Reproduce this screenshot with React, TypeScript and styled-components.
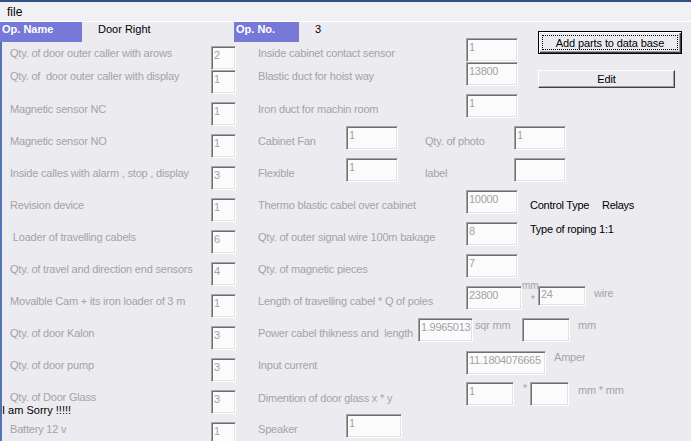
import React from "react";
import styled, { createGlobalStyle } from "styled-components";

const Global = createGlobalStyle`
  html, body { margin: 0; padding: 0; background: #ECEBEF; }
  body { font-family: "Liberation Sans", Arial, sans-serif; }
`;

const FONT = `"Liberation Sans", Arial, sans-serif`;

const Window = styled.div`
  width: 691px;
  height: 441px;
  overflow: hidden;
  box-sizing: border-box;
  background: #ECEBEF;
  border-top: 2px solid #2F4F88;
  display: flex;
  flex-direction: column;
  font-family: ${FONT};
  font-size: 11px;
`;

const MenuBar = styled.div`
  flex: none;
  height: 19px;
  display: flex;
  align-items: center;
  padding-left: 7px;
  background: #F1F0F4;
  border-bottom: 1px solid #FFFFFF;
  color: #000;
  font-size: 12px;
`;

const Header = styled.div`
  flex: none;
  height: 20px;
  display: flex;
  align-items: flex-start;
`;

const Tag = styled.div<{ $w: number }>`
  flex: none;
  box-sizing: border-box;
  width: ${(p) => p.$w}px;
  height: 20px;
  padding: 1px 0 0 2px;
  background: #7679D8;
  color: #FFFFFF;
  font-weight: bold;
  font-size: 11px;
  line-height: 13px;
`;

const HeadValue = styled.div<{ $w: number }>`
  flex: none;
  width: ${(p) => p.$w}px;
  margin: 1px 0 0 16px;
  color: #000;
  font-size: 11px;
  line-height: 13px;
`;

const Body = styled.div`
  flex: 1;
  display: flex;
  flex-direction: column;
  border-left: 2px solid #5273B5;
`;

const Row = styled.div<{ $h?: number }>`
  flex: none;
  display: flex;
  align-items: flex-start;
  height: ${(p) => p.$h ?? 32}px;
`;

const LeftCell = styled.div`
  flex: none;
  width: 209px;
  display: flex;
  flex-direction: column;
`;

const Label = styled.div<{ $dy?: number; $w?: number; $ml?: number; $indent?: number }>`
  flex: none;
  box-sizing: border-box;
  ${(p) => (p.$w !== undefined ? `width: ${p.$w}px;` : "")}
  margin-top: ${(p) => p.$dy ?? 9}px;
  margin-left: ${(p) => p.$ml ?? 0}px;
  padding-left: ${(p) => p.$indent ?? 0}px;
  color: #A4A3A8;
  font-size: 11px;
  line-height: 14px;
  letter-spacing: -0.2px;
  white-space: pre;
  overflow: hidden;
`;

const Note = styled.div<{ $dy?: number; $w?: number; $ml?: number }>`
  flex: none;
  ${(p) => (p.$w !== undefined ? `width: ${p.$w}px;` : "")}
  margin-top: ${(p) => p.$dy ?? 0}px;
  margin-left: ${(p) => p.$ml ?? 0}px;
  color: #000;
  font-size: 11px;
  line-height: 14px;
  letter-spacing: -0.25px;
  white-space: pre;
`;

const Sorry = styled.div`
  color: #000;
  font-size: 11px;
  line-height: 13px;
  white-space: pre;
`;

const UnitStack = styled.div`
  flex: none;
  width: 16px;
  display: flex;
  flex-direction: column;
`;

const Tiny = styled.div<{ $dy: number; $ml?: number }>`
  margin-top: ${(p) => p.$dy}px;
  margin-left: ${(p) => p.$ml ?? 0}px;
  color: #A4A3A8;
  font-size: 10px;
  line-height: 10px;
`;

const Field = styled.input<{ $w: number; $h?: number; $dy?: number; $ml?: number }>`
  flex: none;
  box-sizing: border-box;
  width: ${(p) => p.$w}px;
  height: ${(p) => p.$h ?? 24}px;
  margin: ${(p) => p.$dy ?? 1}px 0 0 ${(p) => p.$ml ?? 0}px;
  padding: 0 1px ${(p) => ((p.$h ?? 24) >= 24 ? 7 : 4)}px 2px;
  font-family: ${FONT};
  font-size: 11px;
  letter-spacing: -0.3px;
  color: #A2A2A6;
  background: #FBFBFC;
  border-style: solid;
  border-width: 1px;
  border-color: #A5A5A8 #FFFFFF #FFFFFF #A5A5A8;
  box-shadow: inset 1px 1px 0 #6E6E70, inset -1px -1px 0 #E2E2E5;
  outline: none;
  -webkit-text-fill-color: #A2A2A6;
`;

const Button = styled.button<{ $w: number; $h: number; $dy: number; $default?: boolean }>`
  flex: none;
  box-sizing: border-box;
  width: ${(p) => p.$w}px;
  height: ${(p) => p.$h}px;
  margin: ${(p) => p.$dy}px 0 0 20px;
  padding: 0;
  background: #ECEBEF;
  color: #000;
  font-family: ${FONT};
  font-size: 11px;
  letter-spacing: -0.1px;
  border: 1px solid;
  border-color: ${(p) => (p.$default ? "#000 #000 #000 #000" : "#FFFFFF #404040 #404040 #FFFFFF")};
  box-shadow: ${(p) =>
    p.$default
      ? "inset 1px 1px 0 #FFFFFF, inset -1px -1px 0 #404040, inset -2px -2px 0 #A0A0A0"
      : "inset -1px -1px 0 #A0A0A0"};
  outline: ${(p) => (p.$default ? "1px dotted #000" : "none")};
  outline-offset: -5px;
`;

export default function App() {
  return (
    <Window>
      <Global />
      <MenuBar>file</MenuBar>
      <Header>
        <Tag $w={82}>Op. Name</Tag>
        <HeadValue $w={136}>Door Right</HeadValue>
        <Tag $w={65}>Op. No.</Tag>
        <HeadValue $w={40}>3</HeadValue>
      </Header>
      <Body>
        <Row $h={24}>
          <LeftCell>
            <Label $dy={4} $indent={8}>Qty. of door outer caller with arows</Label>
          </LeftCell>
          <Field $w={25} $dy={4} readOnly value="2" />
          <Label $dy={4} $ml={22} $w={208}>Inside cabinet contact sensor</Label>
          <Field $w={52} $dy={-4} readOnly value="1" />
          <Button $w={144} $h={23} $dy={-11} $default>Add parts to data base</Button>
        </Row>
        <Row $h={27}>
          <LeftCell>
            <Label $dy={3} $indent={8}>Qty. of  door outer caller with display</Label>
          </LeftCell>
          <Field $w={25} $dy={4} readOnly value="1" />
          <Label $dy={3} $ml={22} $w={208}>Blastic duct for hoist way</Label>
          <Field $w={52} $dy={-4} readOnly value="13800" />
          <Button $w={137} $h={18} $dy={4}>Edit</Button>
        </Row>
        <Row>
          <LeftCell>
            <Label $indent={8}>Magnetic sensor NC</Label>
          </LeftCell>
          <Field $w={25} $dy={9} readOnly value="1" />
          <Label $ml={22} $w={208}>Iron duct for machin room</Label>
          <Field $w={52} readOnly value="1" />
        </Row>
        <Row>
          <LeftCell>
            <Label $indent={8}>Magnetic sensor NO</Label>
          </LeftCell>
          <Field $w={25} $dy={9} readOnly value="1" />
          <Label $ml={22} $w={88}>Cabinet Fan</Label>
          <Field $w={52} readOnly value="1" />
          <Label $ml={27} $w={89}>Qty. of photo</Label>
          <Field $w={52} readOnly value="1" />
        </Row>
        <Row>
          <LeftCell>
            <Label $indent={8}>Inside calles with alarm , stop , display</Label>
          </LeftCell>
          <Field $w={25} $dy={9} readOnly value="3" />
          <Label $ml={22} $w={88}>Flexible</Label>
          <Field $w={52} readOnly value="1" />
          <Label $ml={27} $w={89}>label</Label>
          <Field $w={52} readOnly value="" />
        </Row>
        <Row>
          <LeftCell>
            <Label $indent={8}>Revision device</Label>
          </LeftCell>
          <Field $w={25} $dy={9} readOnly value="1" />
          <Label $ml={22} $w={208}>Thermo blastic cabel over cabinet</Label>
          <Field $w={52} readOnly value="10000" />
          <Note $ml={12} $dy={9} $w={72}>Control Type</Note>
          <Note $dy={9}>Relays</Note>
        </Row>
        <Row>
          <LeftCell>
            <Label $indent={8}> Loader of travelling cabels</Label>
          </LeftCell>
          <Field $w={25} $dy={9} readOnly value="6" />
          <Label $ml={22} $w={208}>Qty. of outer signal wire 100m bakage</Label>
          <Field $w={52} readOnly value="8" />
          <Note $ml={12} $dy={1}>Type of roping 1:1</Note>
        </Row>
        <Row>
          <LeftCell>
            <Label $indent={8}>Qty. of travel and direction end sensors</Label>
          </LeftCell>
          <Field $w={25} $dy={9} readOnly value="4" />
          <Label $ml={22} $w={208}>Qty. of magnetic pieces</Label>
          <Field $w={52} readOnly value="7" />
        </Row>
        <Row>
          <LeftCell>
            <Label $indent={8}>Movalble Cam + its iron loader of 3 m</Label>
          </LeftCell>
          <Field $w={25} $dy={9} readOnly value="1" />
          <Label $ml={22} $w={208}>Length of travelling cabel * Q of poles</Label>
          <Field $w={56} readOnly value="23800" />
          <UnitStack>
            <Tiny $dy={-4}>mm</Tiny>
            <Tiny $dy={4} $ml={9}>*</Tiny>
          </UnitStack>
          <Field $w={48} $h={20} readOnly value="24" />
          <Label $ml={8} $dy={1}>wire</Label>
        </Row>
        <Row>
          <LeftCell>
            <Label $indent={8}>Qty. of door Kalon</Label>
          </LeftCell>
          <Field $w={25} $dy={9} readOnly value="3" />
          <Label $ml={22} $w={160}>Power cabel thikness and  length</Label>
          <Field $w={55} readOnly value="1.9965013" />
          <Label $ml={2} $w={47} $dy={1}>sqr mm</Label>
          <Field $w={48} readOnly value="" />
          <Label $ml={8} $dy={1}>mm</Label>
        </Row>
        <Row>
          <LeftCell>
            <Label $indent={8}>Qty. of door pump</Label>
          </LeftCell>
          <Field $w={25} $dy={9} readOnly value="3" />
          <Label $ml={22} $w={208}>Input current</Label>
          <Field $w={80} $dy={2} readOnly value="11.1804076665" />
          <Label $ml={8} $dy={1}>Amper</Label>
        </Row>
        <Row>
          <LeftCell>
            <Label $indent={8}>Qty. of Door Glass</Label>
            <Sorry>I am Sorry !!!!!</Sorry>
          </LeftCell>
          <Field $w={25} $dy={9} readOnly value="3" />
          <Label $ml={22} $w={208} $dy={10}>Dimention of door glass x * y</Label>
          <Field $w={48} readOnly value="1" />
          <Label $w={16} $indent={9} $dy={0}>*</Label>
          <Field $w={39} readOnly value="" />
          <Label $ml={9} $dy={2}>mm * mm</Label>
        </Row>
        <Row>
          <LeftCell>
            <Label $indent={8}>Battery 12 v</Label>
          </LeftCell>
          <Field $w={25} $dy={9} readOnly value="1" />
          <Label $ml={22} $w={88}>Speaker</Label>
          <Field $w={56} readOnly value="1" />
        </Row>
      </Body>
    </Window>
  );
}
